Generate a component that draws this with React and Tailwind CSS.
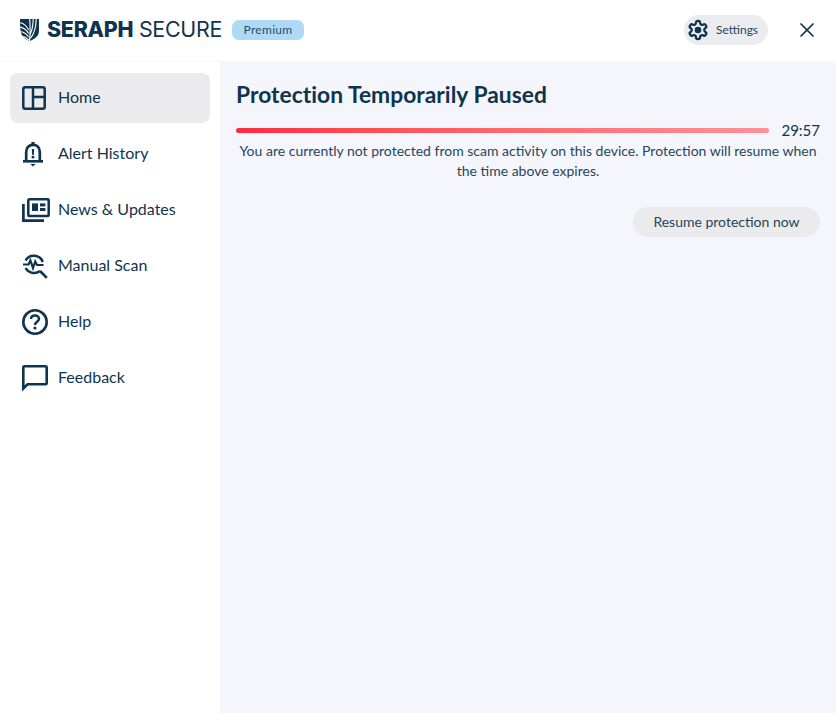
import { X } from 'lucide-react';

const navy = '#0f344d';

function LogoMark() {
    return (
        <svg width="19" height="22" viewBox="0 0 19 22" fill="none">
            <path d="M0 0 H19 V12 C19 16.5 15.5 19.5 10 22 C6 21 2.5 18.5 1 14 C0.3 11 0 8 0 5 Z" fill={navy} />
            <g stroke="#ffffff" strokeWidth="1.1">
                <path d="M-1 3.6 C3.5 4 6.8 7 8.6 11" />
                <path d="M-1 8 C3.5 8.4 6.5 10.6 8.6 14.6" />
                <path d="M0 12.8 C3.5 12.8 6.2 14.6 8.6 18" />
                <path d="M1.5 17.4 C4 17.6 6.5 18.8 8.6 21" />
                <path d="M9.6 -1 C10.4 8 10.2 16 9.4 23" />
                <path d="M13.2 -1 C13.2 6 12.2 11 10.2 15.6" />
                <path d="M16.2 -1 C16.2 8 14.4 14.6 10.4 19.4" />
            </g>
        </svg>
    );
}

function HomeIcon() {
    return (
        <svg width="24" height="24" viewBox="0 0 24 24" fill="none" stroke={navy} strokeWidth="2.5">
            <rect x="1.3" y="1.3" width="21.4" height="21.4" rx="2" />
            <path d="M11 1.3 V22.7 M11 11 H22.7" />
        </svg>
    );
}

function BellIcon() {
    return (
        <svg width="22" height="26" viewBox="0 0 22 26" fill="none">
            <path d="M4.2 19 V11 C4.2 6.5 7 3.8 11 3.8 C15 3.8 17.8 6.5 17.8 11 V19" stroke={navy} strokeWidth="2.7" />
            <path d="M1 19 H21 V21.6 H1 Z" fill={navy} />
            <path d="M9.4 1 H12.6 V4 H9.4 Z M8.4 23 H13.6 L11 25.4 Z" fill={navy} />
            <path d="M9.8 8 H12.2 L11.8 14 H10.2 Z" fill={navy} />
            <circle cx="11" cy="16.2" r="1.4" fill={navy} />
        </svg>
    );
}

function NewsIcon() {
    return (
        <svg width="28" height="24" viewBox="0 0 28 24" fill="none">
            <rect x="6.3" y="1.3" width="20.4" height="16.6" rx="1" stroke={navy} strokeWidth="2.5" />
            <path d="M1.4 6 V22.6 H22" stroke={navy} strokeWidth="2.7" />
            <rect x="10" y="5.4" width="6" height="7.6" fill={navy} />
            <rect x="18" y="5.4" width="5.4" height="3" fill={navy} />
            <rect x="18" y="10" width="5.4" height="3" fill={navy} />
        </svg>
    );
}

function ScanIcon() {
    return (
        <svg width="26" height="26" viewBox="0 0 26 26" fill="none" stroke={navy}>
            <path d="M3.6 7.5 A9.6 9.6 0 0 1 20.8 9" strokeWidth="2.5" />
            <path d="M3.6 15 A9.6 9.6 0 0 0 18 18" strokeWidth="2.5" />
            <path d="M1 11.5 H6.5 L8.4 7.5 L11 15 L13.2 8.5 L15 12 H21.5" strokeWidth="2.2" />
            <path d="M18 18 L24.8 24.8" strokeWidth="2.6" />
        </svg>
    );
}

function HelpIcon() {
    return (
        <svg width="26" height="26" viewBox="0 0 26 26" fill="none" stroke={navy}>
            <circle cx="13" cy="13" r="11.7" strokeWidth="2.6" />
            <path d="M9 10 C9 7.6 10.8 6.4 13 6.4 C15.2 6.4 17 7.8 17 9.8 C17 12.6 13 13 13 16" strokeWidth="2.5" />
            <circle cx="13" cy="19" r="1.6" fill={navy} stroke="none" />
        </svg>
    );
}

function FeedbackIcon() {
    return (
        <svg width="26" height="26" viewBox="0 0 26 26" fill="none">
            <path d="M1.3 23.5 V2.4 C1.3 1.7 1.7 1.3 2.4 1.3 H23.6 C24.3 1.3 24.7 1.7 24.7 2.4 V18.2 C24.7 18.9 24.3 19.3 23.6 19.3 H5.6 Z" stroke={navy} strokeWidth="2.6" />
        </svg>
    );
}

function GearIcon() {
    return (
        <svg width="22" height="22" viewBox="0 0 24 24" fill="none" stroke={navy} strokeWidth="2.5" strokeLinejoin="round">
            <path d="M12.22 2h-.44a2 2 0 0 0-2 2v.18a2 2 0 0 1-1 1.73l-.43.25a2 2 0 0 1-2 0l-.15-.08a2 2 0 0 0-2.73.73l-.22.38a2 2 0 0 0 .73 2.73l.15.1a2 2 0 0 1 1 1.72v.51a2 2 0 0 1-1 1.74l-.15.09a2 2 0 0 0-.73 2.73l.22.38a2 2 0 0 0 2.73.73l.15-.08a2 2 0 0 1 2 0l.43.25a2 2 0 0 1 1 1.73V20a2 2 0 0 0 2 2h.44a2 2 0 0 0 2-2v-.18a2 2 0 0 1 1-1.73l.43-.25a2 2 0 0 1 2 0l.15.08a2 2 0 0 0 2.73-.73l.22-.39a2 2 0 0 0-.73-2.73l-.15-.08a2 2 0 0 1-1-1.74v-.5a2 2 0 0 1 1-1.74l.15-.09a2 2 0 0 0 .73-2.73l-.22-.38a2 2 0 0 0-2.73-.73l-.15.08a2 2 0 0 1-2 0l-.43-.25a2 2 0 0 1-1-1.73V4a2 2 0 0 0-2-2z" />
            <circle cx="12" cy="12" r="3.6" fill={navy} stroke="none" />
        </svg>
    );
}

const navItems = [
    { label: 'Home', icon: <HomeIcon />, active: true },
    { label: 'Alert History', icon: <BellIcon /> },
    { label: 'News & Updates', icon: <NewsIcon /> },
    { label: 'Manual Scan', icon: <ScanIcon /> },
    { label: 'Help', icon: <HelpIcon /> },
    { label: 'Feedback', icon: <FeedbackIcon /> },
];

export default function App() {
    return (
        <div className="w-[836px] h-[713px] flex flex-col bg-white text-[#0f344d] font-['Lato','Liberation_Sans',sans-serif] overflow-hidden">
            <header className="h-[61px] shrink-0 flex items-center pl-[20px] pr-[17px] pb-[1px]">
                <LogoMark />
                <div className="ml-[8px] text-[21.4px] leading-none tracking-[-0.27px] whitespace-nowrap font-['Inter','Liberation_Sans',sans-serif]">
                    <span className="font-extrabold">SERAPH</span> <span className="font-normal">SECURE</span>
                </div>
                <span className="ml-[10px] w-[72px] h-[20px] rounded-[7px] bg-[#aedaf5] flex items-center justify-center text-[12px] tracking-[0.3px] text-[#26506b]">
                    Premium
                </span>
                <button className="ml-auto w-[84px] h-[30px] rounded-full bg-[#ebecef] flex items-center pl-[3px] gap-[7px] text-[12px] text-[#26465c]">
                    <GearIcon />
                    Settings
                </button>
                <X className="ml-[27px] text-[#0f344d]" size={24} strokeWidth={1.7} />
            </header>
            <div className="flex-1 flex min-h-0 border-t border-[#f5f6fc]">
                <nav className="w-[220px] shrink-0 pt-[11px] pl-[10px] pr-[10px] flex flex-col gap-[6px]">
                    {navItems.map((item) => (
                        <div
                            key={item.label}
                            className={`h-[50px] rounded-[8px] flex items-center text-[16px] pb-[2px] ${item.active ? 'bg-[#ebebee]' : ''}`}
                        >
                            <div className="w-[48px] pl-[12px] pt-[2px] flex items-center justify-start">{item.icon}</div>
                            <span>{item.label}</span>
                        </div>
                    ))}
                </nav>
                <main className="flex-1 bg-[#f5f6fc] pl-[16px] pr-[16px] pt-[17px]">
                    <h1 className="text-[22.8px] leading-[30px] font-bold tracking-[0.03px]">Protection Temporarily Paused</h1>
                    <div className="mt-[11px] flex items-center gap-[12px]">
                        <div className="flex-1 h-[5px] rounded-full bg-gradient-to-r from-[#ff2a3c] to-[#ff9098]"></div>
                        <span className="text-[15px] leading-[20px]">29:57</span>
                    </div>
                    <p className="mt-[1px] text-[14px] leading-[20px] text-center text-[#26465c]">
                        You are currently not protected from scam activity on this device. Protection will resume when the time above expires.
                    </p>
                    <div className="mt-[26px] flex justify-end">
                        <button className="w-[187px] h-[30px] pb-[2px] rounded-full bg-[#ebebee] text-[14px] text-[#26465c]">
                            Resume protection now
                        </button>
                    </div>
                </main>
            </div>
        </div>
    );
}
